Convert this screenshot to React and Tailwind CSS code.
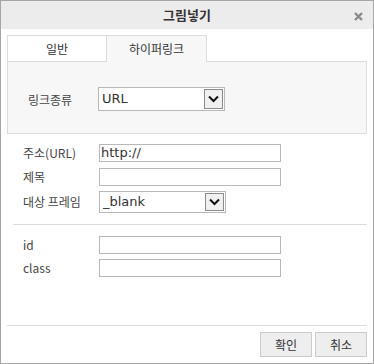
import React from "react";

const KR = { fontFamily: '"Noto Sans CJK KR", "Noto Sans", sans-serif' };

function Chevron() {
  return (
    <svg width="11" height="8" viewBox="0 0 11 8">
      <path d="M1 1.5 L5.5 6 L10 1.5" fill="none" stroke="#111" strokeWidth="2" />
    </svg>
  );
}

function Select({ value, w, h }) {
  return (
    <div
      className={`flex items-stretch border border-[#b9b9b9] bg-white ${w} ${h}`}
    >
      <div className="flex-1 flex items-center pl-[3px] text-[13px] text-[#333] [font-family:'DejaVu_Sans',sans-serif]">
        {value}
      </div>
      <div className="w-[19px] my-[1px] mr-[1px] border border-[#8c8c8c] bg-[#f0f0f0] flex items-center justify-center">
        <Chevron />
      </div>
    </div>
  );
}

function Input({ value = "", mt }) {
  return (
    <div
      className={`w-[182px] h-[18px] border border-[#b9b9b9] bg-white flex items-center pl-[1px] text-[13px] text-[#333] [font-family:'DejaVu_Sans',sans-serif] ${mt || ""}`}
    >
      {value}
    </div>
  );
}

function Row({ label, children, className = "" }) {
  return (
    <div className={`flex items-center ${className}`}>
      <div className="w-[92px] shrink-0 pl-[16px] text-[12px] text-[#444] whitespace-nowrap" style={KR}>
        {label}
      </div>
      {children}
    </div>
  );
}

export default function App() {
  return (
    <div
      className="w-[374px] h-[364px] border border-[#a5a5a5] bg-white flex flex-col text-[#333]"
      style={KR}
    >
      <div className="h-[28px] bg-[#ececec] relative flex items-center justify-center">
        <span className="text-[13px] font-bold text-[#333]">그림넣기</span>
        <svg
          className="absolute right-[10px] top-[11px]"
          width="9"
          height="9"
          viewBox="0 0 9 9"
        >
          <path d="M1 1 L8 8 M8 1 L1 8" stroke="#8a8a8a" strokeWidth="2.4" />
        </svg>
      </div>

      <div className="px-[6px] pt-[6px] flex flex-col flex-1">
        <div className="flex h-[27px]">
          <div className="w-[100px] border border-[#dcdcdc] bg-white flex items-center justify-center text-[12px] text-[#333]">
            일반
          </div>
          <div className="w-[100px] border border-l-0 border-b-0 border-[#dcdcdc] bg-[#f7f7f7] flex items-center justify-center text-[12px] text-[#333]">
            하이퍼링크
          </div>
          <div className="flex-1 border-b border-[#dcdcdc]" />
        </div>
        <div className="h-[72px] border border-t-0 border-[#dcdcdc] bg-[#f7f7f7] flex items-start pt-[25px]">
          <div className="w-[90px] shrink-0 pl-[20px] pt-[4px] text-[12px] text-[#444]">
            링크종류
          </div>
          <Select value="URL" w="w-[127px]" h="h-[24px]" />
        </div>

        <Row label="주소(URL)" className="mt-[10px]">
          <Input value="http://" />
        </Row>
        <Row label="제목" className="mt-[6px]">
          <Input />
        </Row>
        <Row label="대상 프레임" className="mt-[5px]">
          <Select value="_blank" w="w-[127px]" h="h-[22px]" />
        </Row>

        <div className="ml-[6px] mt-[11px] h-px bg-[#dcdcdc]" />

        <Row label="id" className="mt-[11px]">
          <Input />
        </Row>
        <Row label="class" className="mt-[5px]">
          <Input />
        </Row>

        <div className="mt-auto h-px bg-[#dcdcdc]" />
        <div className="flex justify-end gap-[3px] pt-[6px] pb-[6px]">
          <button className="w-[52px] h-[25px] border border-[#cccccc] bg-[#eeeeee] text-[12px] text-[#333]">
            확인
          </button>
          <button className="w-[52px] h-[25px] border border-[#cccccc] bg-[#eeeeee] text-[12px] text-[#333]">
            취소
          </button>
        </div>
      </div>
    </div>
  );
}
